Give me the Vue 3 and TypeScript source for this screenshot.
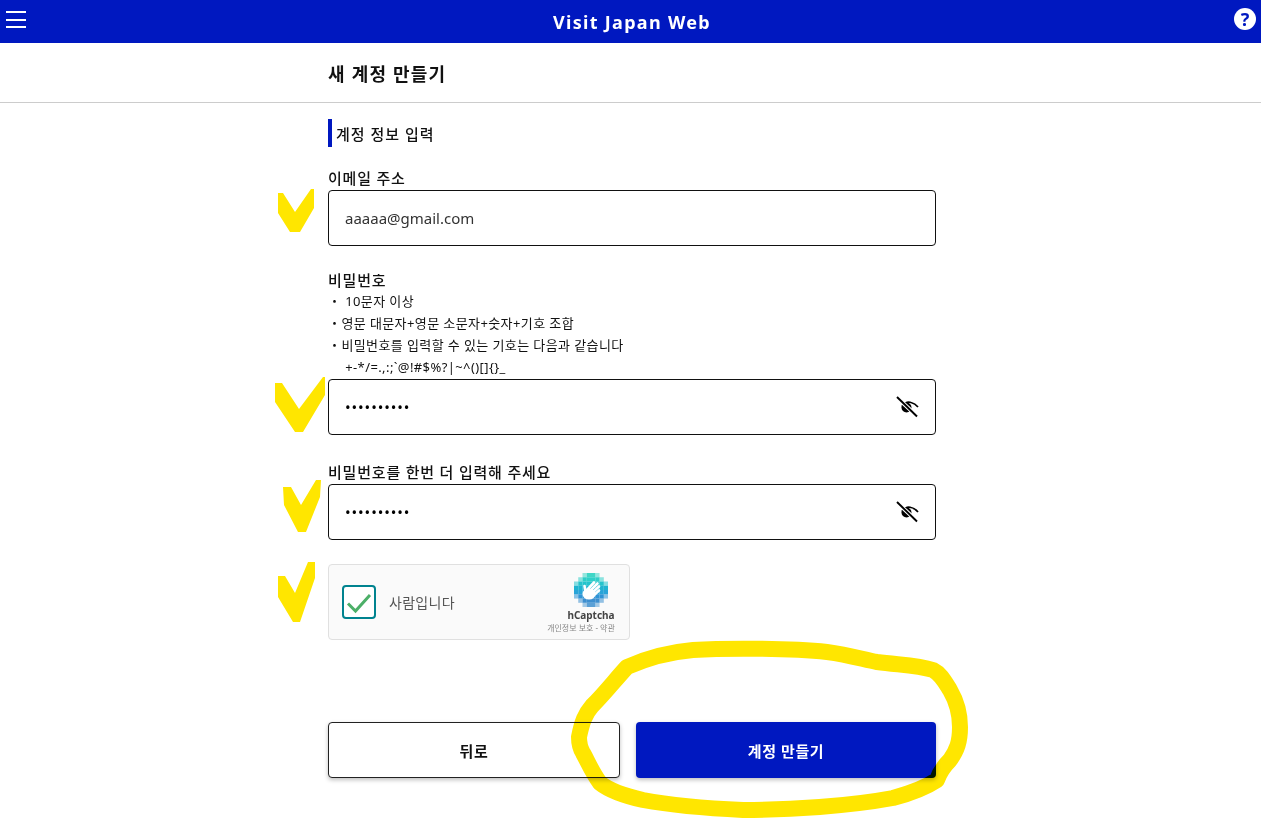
<template>
  <div class="page">
    <header class="topbar">
      <button class="menu" aria-label="menu"><span></span><span></span><span></span></button>
      <div class="brand">Visit Japan Web</div>
      <div class="help">?</div>
    </header>

    <div class="title-row">
      <h1>새 계정 만들기</h1>
    </div>

    <main class="form">
      <div class="section">계정 정보 입력</div>

      <label class="label first">이메일 주소</label>
      <div class="input-box">
        <input value="aaaaa@gmail.com" readonly />
      </div>

      <label class="label pw">비밀번호</label>
      <ul class="hints">
        <li v-for="h in hints" :key="h">{{ h }}</li>
      </ul>
      <div class="input-box">
        <input class="secret" type="password" value="aaaaaaaaaa" readonly />
        <svg class="eye" viewBox="0 0 24 24" width="24" height="24">
          <use href="#eye-off" />
        </svg>
      </div>

      <label class="label again">비밀번호를 한번 더 입력해 주세요</label>
      <div class="input-box">
        <input class="secret" type="password" value="aaaaaaaaaa" readonly />
        <svg class="eye" viewBox="0 0 24 24" width="24" height="24">
          <use href="#eye-off" />
        </svg>
      </div>

      <div class="captcha">
        <div class="cbox">
          <svg viewBox="0 0 30 30" width="30" height="30">
            <path d="M4 16.5l7.5 7.5L26 8" fill="none" stroke="#4caf68" stroke-width="3" />
          </svg>
        </div>
        <span class="human">사람입니다</span>
        <div class="brandbox">
          <svg class="hlogo" viewBox="0 0 34 34" width="34" height="34">
            <rect v-for="c in mosaic" :key="c.k" :x="c.x" :y="c.y" width="4.3" height="4.3" :fill="c.fill" :opacity="c.op" />
            <g fill="none" stroke="#fff" stroke-width="2.6" stroke-linecap="round">
              <path d="M13 17L20 9.500" />
              <path d="M15 19L23.500 10.500" />
              <path d="M17 21L25 13.500" />
              <path d="M19 23L25 17.500" />
              <path d="M11.500 19L10.500 13" />
            </g>
            <ellipse cx="15" cy="21" rx="6.500" ry="5.500" fill="#fff" />
          </svg>
          <div class="hname">hCaptcha</div>
          <div class="hlinks">개인정보 보호 - 약관</div>
        </div>
      </div>

      <div class="actions">
        <button class="btn back">뒤로</button>
        <button class="btn create">계정 만들기</button>
      </div>
    </main>

    <!-- hand-drawn yellow marks over the page -->
    <svg class="marks" viewBox="0 0 1261 822" width="1261" height="822">
      <defs>
        <g id="eye-off">
          <path d="M7 11.500C9.500 8 13 6.500 16 7.500C18.500 8 21 9.500 23 12" fill="none" stroke="#000" stroke-width="1.700" />
          <path d="M1.500 12.500C3 11 4 10 5 9.500L14 19C11 19.500 7 18 5 16C4 15 2.500 13.500 1.500 12.500Z" fill="#000" opacity="0" />
          <circle cx="11.500" cy="12.500" r="5" fill="#000" />
          <path d="M2 2.500L22 21" fill="none" stroke="#fff" stroke-width="4" />
          <path d="M2 2L22 21.500" fill="none" stroke="#000" stroke-width="1.900" />
        </g>
      </defs>
      <g fill="#ffe600">
        <polygon points="278,193 283,193 295,212 311,189 314,189 314,208 300,232 290,232 278,213" />
        <polygon points="275,383 282,383 299,409 323,377 325,377 325,395 303,432 295,432 275,402" />
        <polygon points="283,487 291,487 301,505 316,480 321,480 320,497 306,532 298,532 284,505" />
        <polygon points="278,576 285,576 295,593 308,562 315,562 315,578 300,622 293,622 278,597" />
      </g>
      <path
        d="M693 650C725 648 790 648 827 652C850 655 865 660 877 662C900 665 918 665 933 670C941 674 945 682 950 690C957 702 960 712 960 727C960 742 957 750 950 760C944 766 940 771 937 780C925 788 908 794 893 798C850 806 790 810 743 810C700 808 670 805 643 800C625 796 610 791 600 783C592 772 588 762 583 753C580 748 579 742 579 737C582 722 585 714 592 706C605 693 615 680 627 667C645 659 670 652 693 650Z"
        fill="none" stroke="#ffe600" stroke-width="16" stroke-linejoin="round"
      />
    </svg>
  </div>
</template>

<script setup lang="ts">
const hints = [
  '・ 10문자 이상',
  '・영문 대문자+영문 소문자+숫자+기호 조합',
  '・비밀번호를 입력할 수 있는 기호는 다음과 같습니다',
  '　 +-*/=.,:;`@!#$%?|~^()[]{}_'
]

// pixelated hCaptcha badge, teal on top going to blue at the bottom
const rows = ['#3fd6c6', '#2fcfc8', '#25c4cc', '#1fb4d0', '#28a4d8', '#2f94d6', '#3d8fd0', '#5aa0d6']
const mosaic = rows.flatMap((fill, r) =>
  rows.map((_, c) => {
    const dist = Math.abs(r - 3.5) + Math.abs(c - 3.5)
    return {
      k: `${r}-${c}`,
      x: c * 4.25,
      y: r * 4.25,
      fill,
      op: dist > 5 ? 0 : dist > 4 ? 0.55 : 1
    }
  })
)
</script>

<style scoped>
.page {
  position: relative;
  width: 1261px;
  height: 822px;
  overflow: hidden;
  background: #fff;
  color: #111;
  font-family: "Noto Sans", "Noto Sans CJK KR", sans-serif;
}

.topbar {
  position: relative;
  height: 43px;
  background: #0018c0;
  display: flex;
  align-items: center;
  justify-content: center;
}
.menu {
  position: absolute;
  left: 6px;
  top: 11px;
  width: 20px;
  height: 17px;
  padding: 0;
  border: 0;
  background: none;
  display: flex;
  flex-direction: column;
  justify-content: space-between;
}
.menu span {
  display: block;
  height: 2px;
  background: #fff;
}
.brand {
  color: #fff;
  font-size: 18px;
  font-weight: 700;
  letter-spacing: 1.3px;
  margin-left: 3px;
}
.help {
  position: absolute;
  right: 5px;
  top: 8px;
  width: 22px;
  height: 22px;
  border-radius: 50%;
  background: #fff;
  color: #0018c0;
  font-size: 18px;
  font-weight: 700;
  line-height: 22px;
  text-align: center;
}

.title-row {
  height: 59px;
  padding-left: 328px;
  border-bottom: 1px solid #ccc;
  display: flex;
  align-items: center;
}
h1 {
  margin: 0;
  font-size: 18px;
  font-weight: 700;
  letter-spacing: 1.2px;
}

.form {
  width: 608px;
  margin-left: 328px;
  padding-top: 16px;
}
.section {
  height: 28px;
  line-height: 30px;
  border-left: 4px solid #0018c0;
  padding-left: 4px;
  font-size: 15px;
  font-weight: 500;
  letter-spacing: 1px;
}
.label {
  display: block;
  font-size: 15px;
  font-weight: 500;
  letter-spacing: 0.8px;
  line-height: 24px;
}
.label.first { margin-top: 19px; }
.label.pw { margin-top: 24px; line-height: 20px; }
.label.again { margin-top: 25px; }

.hints {
  list-style: none;
  margin: 0 0 1px;
  padding: 0;
  font-size: 13px;
  line-height: 22px;
  letter-spacing: 0.4px;
}

.input-box {
  position: relative;
  height: 56px;
  box-sizing: border-box;
  border: 1px solid #111;
  border-radius: 4px;
  display: flex;
  align-items: center;
}
.input-box input {
  flex: 1;
  min-width: 0;
  height: 100%;
  box-sizing: border-box;
  border: 0;
  outline: 0;
  padding: 0 16px;
  background: transparent;
  color: #333;
  font-family: inherit;
  font-size: 15px;
}
.input-box input.secret {
  color: #000;
  letter-spacing: 0.9px;
}
.eye {
  position: absolute;
  right: 16px;
  top: 15px;
}

.captcha {
  margin-top: 24px;
  width: 302px;
  height: 76px;
  box-sizing: border-box;
  border: 1px solid #e0e0e0;
  border-radius: 4px;
  background: #fafafa;
  display: flex;
  align-items: center;
  position: relative;
}
.cbox {
  width: 34px;
  height: 34px;
  box-sizing: border-box;
  margin-left: 13px;
  border: 2px solid #00838f;
  border-radius: 4px;
  background: #fff;
  display: flex;
  align-items: center;
  justify-content: center;
}
.human {
  margin-left: 13px;
  font-size: 14px;
  color: #555;
  letter-spacing: 0.3px;
}
.brandbox {
  position: absolute;
  right: 10px;
  top: 8px;
  width: 76px;
  display: flex;
  flex-direction: column;
  align-items: center;
}
.hlogo { margin-left: 20px; }
.hname {
  margin-top: 1px;
  margin-left: 20px;
  font-size: 10px;
  line-height: 14px;
  font-weight: 700;
  color: #444;
}
.hlinks {
  font-size: 8px;
  line-height: 11px;
  color: #888;
  white-space: nowrap;
}

.actions {
  margin-top: 82px;
  display: flex;
  gap: 16px;
}
.btn {
  height: 56px;
  box-sizing: border-box;
  border-radius: 4px;
  font-family: inherit;
  font-size: 15px;
  font-weight: 700;
  letter-spacing: 0.6px;
  box-shadow: 0 2px 4px rgba(0, 0, 0, 0.25);
}
.back {
  width: 292px;
  background: #fff;
  color: #111;
  border: 1px solid #222;
}
.create {
  width: 300px;
  background: #0018c0;
  color: #fff;
  border: 0;
}

.marks {
  position: absolute;
  left: 0;
  top: 0;
  pointer-events: none;
  mix-blend-mode: multiply;
}
</style>

<style>
html, body { margin: 0; background: #fff; }
</style>
